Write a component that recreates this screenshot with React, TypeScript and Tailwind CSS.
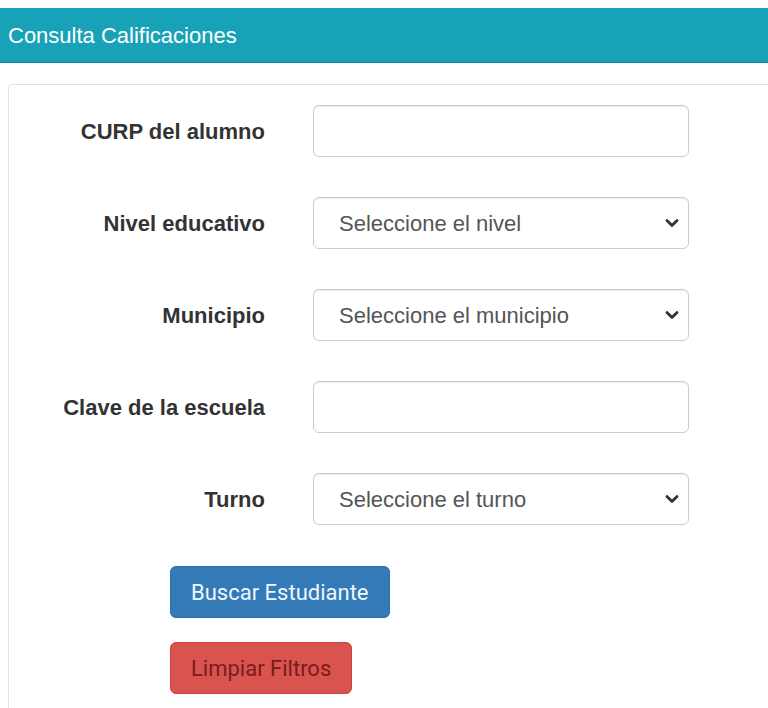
import React from "react";

const Chevron = () => (
  <svg className="pointer-events-none absolute right-[10px] top-1/2 -translate-y-1/2" width="14" height="10" viewBox="0 0 14 10" fill="none">
    <path d="M2 2.5l5 5 5-5" stroke="#333" strokeWidth="2.8" strokeLinecap="round" strokeLinejoin="round" />
  </svg>
);

const Field = ({ label, children }: { label: string; children: React.ReactNode }) => (
  <div className="flex items-center gap-[48px]">
    <label className="w-[256px] text-right font-bold text-[22px] text-[#333]">{label}</label>
    {children}
  </div>
);

const TextInput = () => (
  <input type="text" className="w-[376px] h-[52px] rounded-[6px] border border-[#ccc] bg-white px-[18px] text-[22px] text-[#555] shadow-[inset_0_1px_1px_rgba(0,0,0,0.075)] outline-none" />
);

const Select = ({ placeholder }: { placeholder: string }) => (
  <div className="relative w-[376px] h-[52px]">
    <select className="w-full h-full appearance-none rounded-[6px] border border-[#ccc] bg-white pl-[25px] pr-10 text-[22px] text-[#555] shadow-[inset_0_1px_1px_rgba(0,0,0,0.075)] outline-none">
      <option>{placeholder}</option>
    </select>
    <Chevron />
  </div>
);

export default function App() {
  return (
    <div className="w-[768px] h-[708px] overflow-hidden bg-white pt-2 font-['Liberation_Sans',Arial,sans-serif]">
      {/* Header */}
      <div className="h-[55px] bg-[#18a2b8] border-b border-[#138a9c] flex items-center pl-2">
        <span className="text-[22px] text-white">Consulta Calificaciones</span>
      </div>

      {/* Form panel */}
      <div className="mt-[21px] ml-2 w-[800px] rounded-tl-[4px] border border-[#e2e2e2] pt-5 pb-8">
        <div className="flex flex-col gap-[40px]">
          <Field label="CURP del alumno">
            <TextInput />
          </Field>
          <Field label="Nivel educativo">
            <Select placeholder="Seleccione el nivel" />
          </Field>
          <Field label="Municipio">
            <Select placeholder="Seleccione el municipio" />
          </Field>
          <Field label="Clave de la escuela">
            <TextInput />
          </Field>
          <Field label="Turno">
            <Select placeholder="Seleccione el turno" />
          </Field>
        </div>

        <div className="ml-[161px] mt-[41px] flex flex-col items-start gap-[24px]">
          <button className="h-[52px] rounded-[6px] bg-[#337ab7] border border-[#2e6da4] px-[20px] text-[22px] text-[#eef6ff] font-['Roboto',sans-serif]">
            Buscar Estudiante
          </button>
          <button className="h-[52px] rounded-[6px] bg-[#d9534f] border border-[#d43f3a] px-[20px] text-[22px] text-[#7a1c1c] font-['Roboto',sans-serif]">
            Limpiar Filtros
          </button>
        </div>
      </div>
    </div>
  );
}
